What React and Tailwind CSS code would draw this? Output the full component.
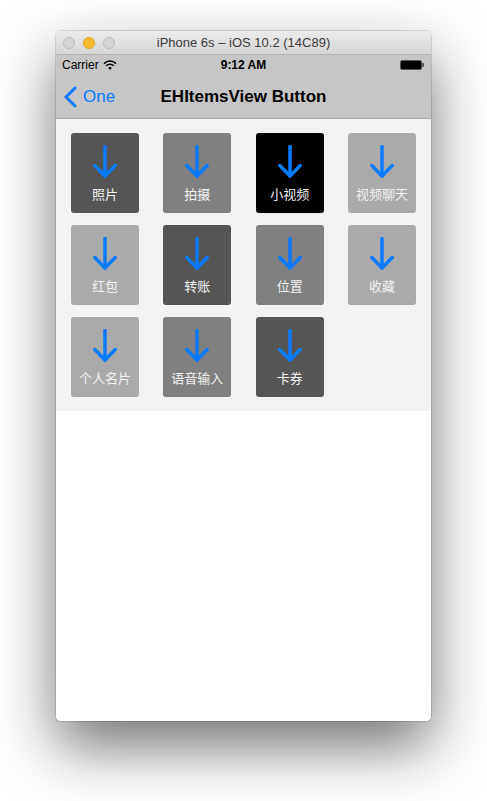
import React from "react";

const items = [
  { label: "照片", bg: "bg-[#555555]" },
  { label: "拍摄", bg: "bg-[#808080]" },
  { label: "小视频", bg: "bg-black" },
  { label: "视频聊天", bg: "bg-[#aaaaaa]" },
  { label: "红包", bg: "bg-[#aaaaaa]" },
  { label: "转账", bg: "bg-[#555555]" },
  { label: "位置", bg: "bg-[#808080]" },
  { label: "收藏", bg: "bg-[#aaaaaa]" },
  { label: "个人名片", bg: "bg-[#aaaaaa]" },
  { label: "语音输入", bg: "bg-[#808080]" },
  { label: "卡券", bg: "bg-[#555555]" },
];

function DownArrow() {
  return (
    <svg width="24" height="34" viewBox="0 0 24 34" fill="none">
      <path d="M12 1.5V31" stroke="#0a7aff" strokeWidth="3.5" strokeLinecap="round" />
      <path d="M1.8 20.5L12 31L22.2 20.5" stroke="#0a7aff" strokeWidth="3.5" strokeLinecap="round" strokeLinejoin="round" />
    </svg>
  );
}

function ItemButton({ label, bg }) {
  return (
    <div className={`${bg} w-[68px] h-[80px] rounded-[3px] flex flex-col items-center pt-[12px]`}>
      <DownArrow />
      <span className="mt-[8px] text-[13px] leading-[15px] text-[#f2f2f2] whitespace-nowrap">{label}</span>
    </div>
  );
}

function Wifi() {
  return (
    <svg width="14" height="10" viewBox="0 0 14 10" className="ml-[4px]">
      <path d="M1 3.6 A8.5 8.5 0 0 1 13 3.6" stroke="#000" strokeWidth="1.5" fill="none" />
      <path d="M3.2 5.8 A5.4 5.4 0 0 1 10.8 5.8" stroke="#000" strokeWidth="1.5" fill="none" />
      <path d="M7 9.8 L5.2 7.9 A2.6 2.6 0 0 1 8.8 7.9 Z" fill="#000" />
    </svg>
  );
}

function App() {
  return (
    <div className="min-h-[801px] w-[487px] bg-white pl-[56px] pt-[31px]" style={{ fontFamily: '"Liberation Sans", "Noto Sans CJK SC", sans-serif' }}>
      <div className="w-[375px] rounded-[5px] overflow-hidden bg-white shadow-[0_26px_60px_rgba(0,0,0,0.55),0_0_0_1px_rgba(0,0,0,0.12)]">
        {/* window title bar */}
        <div className="relative h-[24px] flex items-center justify-center bg-gradient-to-b from-[#ebebeb] to-[#d6d6d6] border-b border-[#b4b4b4]">
          <div className="absolute left-[7px] top-[6px] flex gap-[8px]">
            <span className="w-[12px] h-[12px] rounded-full bg-[#d4d4d4] border border-[#bcbcbc]"></span>
            <span className="w-[12px] h-[12px] rounded-full bg-[#fdbc2f] border border-[#dea123]"></span>
            <span className="w-[12px] h-[12px] rounded-full bg-[#d4d4d4] border border-[#bcbcbc]"></span>
          </div>
          <span className="text-[13px] text-[#3c3c3c]">iPhone 6s – iOS 10.2 (14C89)</span>
        </div>

        {/* status bar */}
        <div className="h-[20px] bg-[#c6c6c6] flex items-center justify-between px-[6px] text-[12px] text-black">
          <div className="flex items-center w-[100px]">
            <span>Carrier</span>
            <Wifi />
          </div>
          <span className="font-bold">9:12 AM</span>
          <div className="flex items-center justify-end w-[100px] pr-[1px]">
            <div className="w-[22px] h-[10px] rounded-[2px] border border-[#555] bg-black"></div>
            <div className="w-[2px] h-[4px] bg-[#555] rounded-r-[1px]"></div>
          </div>
        </div>

        {/* navigation bar */}
        <div className="relative h-[44px] bg-[#c6c6c6] border-b border-[#a9a9a9] flex items-center justify-center">
          <div className="absolute left-[8px] top-0 h-full flex items-center gap-[6px] text-[#0a7aff]">
            <svg width="13" height="22" viewBox="0 0 13 22" fill="none">
              <path d="M11 2L2 11L11 20" stroke="#0a7aff" strokeWidth="3" strokeLinecap="round" strokeLinejoin="round" />
            </svg>
            <span className="text-[17px]">One</span>
          </div>
          <span className="text-[17px] font-bold text-black">EHItemsView Button</span>
        </div>

        {/* items */}
        <div className="bg-[#f2f2f2] px-[15px] pt-[14px] pb-[14px] grid grid-cols-[68px_68px_68px_68px] justify-between gap-y-[12px]">
          {items.map((it) => (
            <ItemButton key={it.label} label={it.label} bg={it.bg} />
          ))}
        </div>

        <div className="h-[310px] bg-white"></div>
      </div>
    </div>
  );
}

export default App;
